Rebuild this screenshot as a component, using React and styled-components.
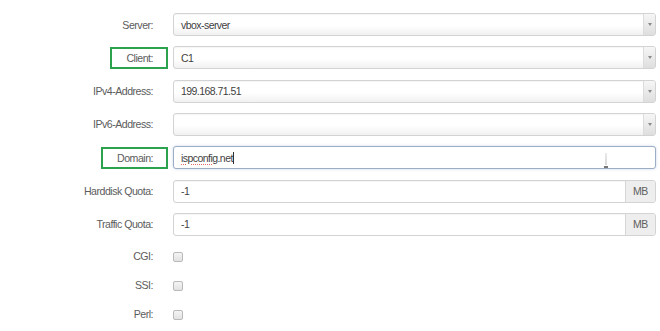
import React from "react";
import styled, { createGlobalStyle, css } from "styled-components";

const Global = createGlobalStyle`
  html, body { margin: 0; padding: 0; background: #fff; }
  body { font-family: "Liberation Sans", Arial, sans-serif; }
`;

const Form = styled.div`
  width: 660px;
  height: 331px;
  box-sizing: border-box;
  padding: 13px 4px 0 0;
  display: flex;
  flex-direction: column;
  gap: 10.33px;
  overflow: hidden;
`;

const Row = styled.div`
  display: grid;
  grid-template-columns: 153px 1fr;
  column-gap: 20px;
  align-items: center;
  height: ${(p) => (p.$check ? "19px" : "23px")};
`;

const Label = styled.div`
  justify-self: end;
  position: relative;
  font-size: 10.6px;
  letter-spacing: -0.5px;
  color: #5c5c5c;
  line-height: 12px;
  ${(p) =>
    p.$mark &&
    css`
      &::after {
        content: "";
        position: absolute;
        left: -16px;
        right: -15px;
        top: -5px;
        bottom: -5px;
        border: 2px solid #2ca24e;
        box-sizing: border-box;
      }
    `}
`;

const Box = styled.div`
  position: relative;
  height: 23px;
  box-sizing: border-box;
  border: 1px solid #d3d3d3;
  border-radius: 3px;
  display: flex;
  align-items: stretch;
  overflow: hidden;
  font-size: 10.5px;
  letter-spacing: -0.55px;
  color: #3f3f3f;
  background: ${(p) =>
    p.$select ? "linear-gradient(#ffffff 0%, #ffffff 55%, #f1f1f1 100%)" : "#fff"};
  box-shadow: ${(p) =>
    p.$focus
      ? "0 0 3px rgba(110,140,190,0.35)"
      : "inset 0 1px 1px rgba(0,0,0,0.04)"};
  ${(p) =>
    p.$focus &&
    css`
      border-color: #9cadc6;
    `}
`;

const Value = styled.div`
  flex: 1;
  display: flex;
  align-items: center;
  padding-left: 7px;
  white-space: nowrap;
`;

const Arrow = styled.div`
  width: 11px;
  border-left: 1px solid #dcdcdc;
  background: linear-gradient(#f6f6f6, #dedede);
  display: flex;
  align-items: center;
  justify-content: center;
  &::before {
    content: "";
    border-left: 2px solid transparent;
    border-right: 2px solid transparent;
    border-top: 3px solid #8a8a8a;
  }
`;

const Addon = styled.div`
  width: 29px;
  border-left: 1px solid #d6d6d6;
  background: #eeeeee;
  color: #606060;
  display: flex;
  align-items: center;
  justify-content: center;
  letter-spacing: -0.3px;
`;

const Misspelled = styled.span`
  text-decoration: underline dotted #e06a6a;
  text-decoration-thickness: 1px;
  text-underline-offset: 2px;
`;

const Caret = styled.span`
  display: inline-block;
  width: 1px;
  height: 12px;
  background: #333;
`;

const IBeam = styled.div`
  position: absolute;
  left: 431px;
  top: 6px;
  width: 2px;
  height: 12px;
  background: linear-gradient(#eaeaea, #d8d8d8);
  &::after {
    content: "";
    position: absolute;
    left: -1px;
    bottom: -3px;
    width: 4px;
    height: 2px;
    background: #777;
  }
`;

const Check = styled.div`
  width: 8px;
  height: 8px;
  margin-top: 2px;
  border: 1px solid #b9b9b9;
  border-radius: 2px;
  background: linear-gradient(#f4f4f4, #e2e2e2);
`;

const SelectField = ({ value }) => (
  <Box $select>
    <Value>{value}</Value>
    <Arrow />
  </Box>
);

const QuotaField = ({ value }) => (
  <Box>
    <Value>{value}</Value>
    <Addon>MB</Addon>
  </Box>
);

export default function App() {
  return (
    <>
      <Global />
      <Form>
        <Row>
          <Label>Server:</Label>
          <SelectField value="vbox-server" />
        </Row>
        <Row>
          <Label $mark>Client:</Label>
          <SelectField value="C1" />
        </Row>
        <Row>
          <Label>IPv4-Address:</Label>
          <SelectField value="199.168.71.51" />
        </Row>
        <Row>
          <Label>IPv6-Address:</Label>
          <SelectField value="" />
        </Row>
        <Row>
          <Label $mark>Domain:</Label>
          <Box $focus>
            <Value>
              <Misspelled>ispconfig</Misspelled>.net
              <Caret />
            </Value>
            <IBeam />
          </Box>
        </Row>
        <Row>
          <Label>Harddisk Quota:</Label>
          <QuotaField value="-1" />
        </Row>
        <Row>
          <Label>Traffic Quota:</Label>
          <QuotaField value="-1" />
        </Row>
        <Row $check>
          <Label>CGI:</Label>
          <Check />
        </Row>
        <Row $check>
          <Label>SSI:</Label>
          <Check />
        </Row>
        <Row $check>
          <Label>Perl:</Label>
          <Check />
        </Row>
      </Form>
    </>
  );
}
